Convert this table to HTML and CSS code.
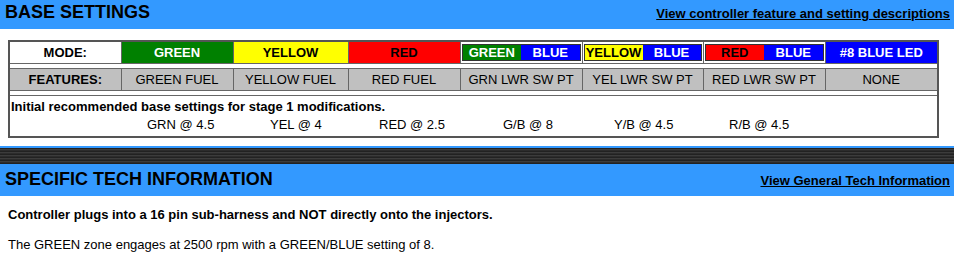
FILE: index.html
```html
<!DOCTYPE html>
<html lang="en">
<head>
<meta charset="UTF-8" />
<title>Base Settings</title>
<link rel="stylesheet" href="styles.css">
</head>
<body>

<div class="bar bar-top">
  <h2>BASE SETTINGS</h2>
  <a href="#">View controller feature and setting descriptions</a>
</div>

<table class="settings">
  <colgroup>
    <col style="width:112px">
    <col style="width:112px">
    <col style="width:115px">
    <col style="width:112px">
    <col style="width:122px">
    <col style="width:121px">
    <col style="width:122px">
    <col style="width:113px">
  </colgroup>
  <tr class="modes">
    <th>MODE:</th>
    <td class="green">GREEN</td>
    <td class="yellow">YELLOW</td>
    <td class="red">RED</td>
    <td class="pair"><div><span class="green">GREEN</span><span class="blue">BLUE</span></div></td>
    <td class="pair"><div><span class="yellow">YELLOW</span><span class="blue">BLUE</span></div></td>
    <td class="pair"><div><span class="red">RED</span><span class="blue">BLUE</span></div></td>
    <td class="blue">#8 BLUE LED</td>
  </tr>
  <tr class="gap"><td colspan="8"></td></tr>
  <tr class="features">
    <th>FEATURES:</th>
    <td>GREEN FUEL</td>
    <td>YELLOW FUEL</td>
    <td>RED FUEL</td>
    <td>GRN LWR SW PT</td>
    <td>YEL LWR SW PT</td>
    <td>RED LWR SW PT</td>
    <td>NONE</td>
  </tr>
  <tr class="gap"><td colspan="8"></td></tr>
  <tr class="notes">
    <td colspan="8">
      <b>Initial recommended base settings for stage 1 modifications.</b>
      <div class="values">
        <span></span>
        <span>GRN @ 4.5</span>
        <span>YEL @ 4</span>
        <span>RED @ 2.5</span>
        <span>G/B @ 8</span>
        <span>Y/B @ 4.5</span>
        <span>R/B @ 4.5</span>
      </div>
    </td>
  </tr>
</table>

<div class="stripe"></div>
<div class="bar">
  <h2>SPECIFIC TECH INFORMATION</h2>
  <a href="#">View General Tech Information</a>
</div>

<div class="tech">
  <p><b>Controller plugs into a 16 pin sub-harness and NOT directly onto the injectors.</b></p>
  <p>The GREEN zone engages at 2500 rpm with a GREEN/BLUE setting of 8.</p>
</div>

</body>
</html>
```

FILE: styles.css
```css
body {
  margin: 0;
  font-family: "Liberation Sans", Arial, sans-serif;
  font-size: 13px;
  color: #000;
  background: #fff;
}

/* blue section header */
.bar {
  display: flex;
  justify-content: space-between;
  align-items: baseline;
  height: 32px;
  box-sizing: border-box;
  padding: 5px 4px 0 5px;
  background: #3399ff;
}
.bar-top {
  height: 29px;
  padding-top: 2px;
}
.bar h2 {
  margin: 0;
  font-size: 18px;
  font-weight: bold;
}
.bar a {
  font-size: 13px;
  font-weight: bold;
  color: #000;
}

/* settings table */
.settings {
  width: 929px;
  margin: 11px 0 0 8px;
  table-layout: fixed;
  border-collapse: collapse;
  border: 2px solid #555;
}
.settings th,
.settings td {
  border: 1px solid #666;
  padding: 0;
  text-align: center;
}
.modes th,
.modes td {
  height: 19px;
  font-weight: bold;
}
.modes th {
  background: #fff;
}
.features th,
.features td {
  height: 21px;
  background: #c0c0c0;
  font-weight: normal;
}
.features th {
  font-weight: bold;
}
.gap td {
  height: 4px;
}

.green {
  background: #008000;
  color: #fff;
}
.yellow {
  background: #ffff00;
  color: #000;
}
.red {
  background: #ff0000;
  color: #000;
}
.blue {
  background: #0000ff;
  color: #fff;
}

.settings td.pair {
  padding: 1px;
  background: #fff;
}
.pair div {
  display: flex;
  border: 1px solid #333;
}
.pair span {
  flex: 1;
  height: 15px;
  line-height: 15px;
}

.notes td {
  height: 38px;
  padding: 1px 1px 1px;
  text-align: left;
  line-height: 18px;
}
.values {
  display: grid;
  grid-template-columns: 136px 123px 109px 124px 111px 115px auto;
}

/* dark band above second header */
.stripe {
  height: 16px;
  margin-top: 8px;
  border-top: 2px solid #3399ff;
  background: repeating-linear-gradient(#222 0 1px, #3c3c3c 1px 2px, #2c2c2c 2px 3px);
}

.tech {
  padding: 11px 8px 0;
}
.tech p {
  margin: 0 0 15px;
  line-height: 15px;
}
.tech p:last-child {
  margin-bottom: 0;
}
```
